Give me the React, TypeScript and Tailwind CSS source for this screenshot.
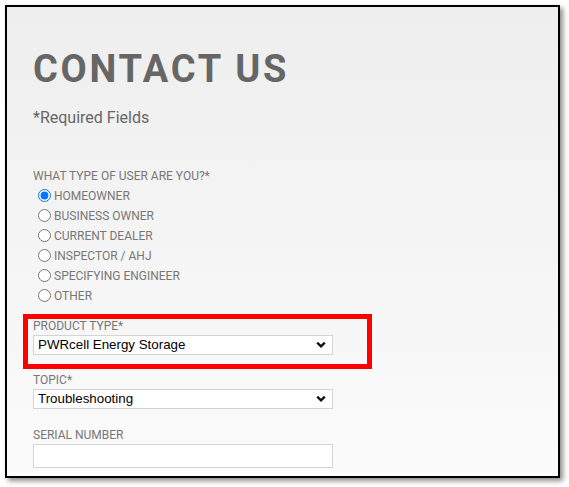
import React from 'react';

const userTypes = [
  'HOMEOWNER',
  'BUSINESS OWNER',
  'CURRENT DEALER',
  'INSPECTOR / AHJ',
  'SPECIFYING ENGINEER',
  'OTHER',
];

function Chevron() {
  return (
    <svg width="10" height="7" viewBox="0 0 10 7" className="absolute right-[6px] top-1/2 -translate-y-1/2">
      <path d="M1.2 1.2 L5 4.8 L8.8 1.2" fill="none" stroke="#111" strokeWidth="2.4" />
    </svg>
  );
}

function FakeSelect({ value }: { value: string }) {
  return (
    <div className="relative w-[300px] h-[20px] bg-white border border-[#d4d4d4] pl-[4px] flex items-center text-[13.33px] text-black font-['Liberation_Sans',Arial,sans-serif]">
      <span className="leading-none">{value}</span>
      <Chevron />
    </div>
  );
}

export default function App() {
  return (
    <div className="w-[569px] h-[487px] bg-white pl-[5px] pt-[5px] font-['Roboto',sans-serif]">
      <div className="w-[555px] h-[473px] border-2 border-black bg-gradient-to-b from-[#eeeeee] to-[#fbfbfb] shadow-[3px_3px_5px_rgba(0,0,0,0.45)] pl-[26px] pt-[43px] overflow-hidden">
        <h1 className="text-[38px] leading-none font-bold tracking-[0.072em] text-[#666666]">CONTACT US</h1>
        <p className="mt-[20px] text-[16px] leading-[20px] text-[#666666]">*Required Fields</p>

        <div className="mt-[40px] text-[12px] leading-[16px] text-[#777777]">WHAT TYPE OF USER ARE YOU?*</div>
        <div className="mt-[2px] flex flex-col">
          {userTypes.map((t, i) => (
            <label key={t} className="h-5 flex items-center pl-[5px] text-[12px] text-[#777777]">
              <input
                type="radio"
                name="usertype"
                defaultChecked={i === 0}
                className="m-0 mr-[3px] w-[13px] h-[13px] -translate-y-[1px] accent-[#0075ff]"
              />
              <span>{t}</span>
            </label>
          ))}
        </div>

        <div className="relative mt-[12px]">
          <div className="absolute -left-[10px] -top-[4px] w-[349px] h-[55px] border-[5px] border-[#ff0000] pointer-events-none" />
          <div className="text-[12px] leading-[16px] text-[#777777]">PRODUCT TYPE*</div>
          <div className="mt-px">
            <FakeSelect value="PWRcell Energy Storage" />
          </div>
        </div>

        <div className="mt-[17px] text-[12px] leading-[16px] text-[#777777]">TOPIC*</div>
        <div className="mt-px">
          <FakeSelect value="Troubleshooting" />
        </div>

        <div className="mt-[18px] text-[12px] leading-[16px] text-[#777777]">SERIAL NUMBER</div>
        <div className="mt-px w-[300px] h-[24px] bg-white border border-[#d4d4d4]" />
      </div>
    </div>
  );
}
